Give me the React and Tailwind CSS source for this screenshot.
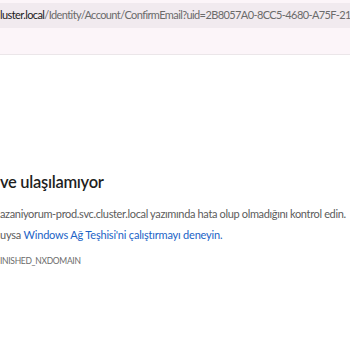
import React from 'react'

export default function App() {
  return (
    <div className="w-[350px] h-[350px] overflow-hidden bg-white font-['Lato','Noto_Sans',sans-serif]">
      <div className="bg-[#fcf5f9] pt-[3px] h-[55px] border-b border-[#ebe6e9]">
        <div className="h-[25px] bg-[#f1eaef] flex items-center whitespace-nowrap overflow-hidden text-[11px] tracking-[-0.6px]">
          <span className="text-[#1b1b1b]">luster.local</span>
          <span className="text-[#6b6b6b]">/Identity/Account/ConfirmEmail?uid=2B8057A0-8CC5-4680-A75F-213F</span>
        </div>
      </div>
      <div className="pt-[116px] whitespace-nowrap">
        <h1 className="text-[16.5px] font-semibold tracking-[-0.3px] text-[#1f1f1f] leading-[22px]">ve ulaşılamıyor</h1>
        <p className="mt-[13px] text-[11px] tracking-[-0.35px] text-[#5c5c5c] leading-[16px]">
          azaniyorum-prod.svc.cluster.local yazımında hata olup olmadığını kontrol edin.
        </p>
        <p className="mt-[5px] text-[11px] tracking-[-0.2px] text-[#5c5c5c] leading-[16px]">
          uysa <span className="text-[#1b63c6]">Windows Ağ Teşhisi'ni çalıştırmayı deneyin.</span>
        </p>
        <p className="mt-[11px] text-[8.5px] tracking-[-0.3px] text-[#6b6b6b] leading-[14px]">INISHED_NXDOMAIN</p>
      </div>
    </div>
  )
}
